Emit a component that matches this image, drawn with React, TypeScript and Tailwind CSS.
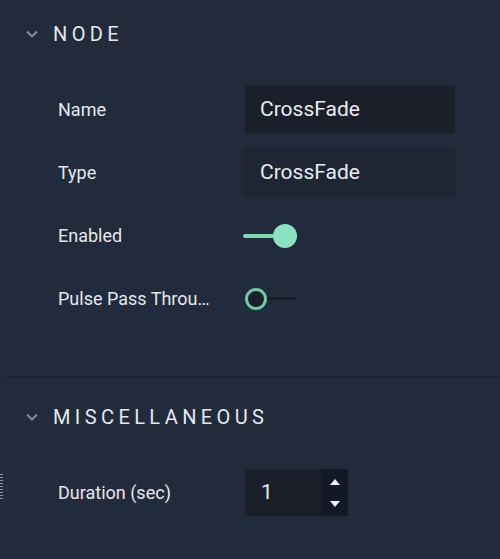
import React from "react";

const font = { fontFamily: "Roboto, 'Noto Sans', sans-serif" };

function Chevron() {
  return (
    <svg width="14" height="10" viewBox="0 0 14 10" className="shrink-0">
      <path d="M2 2.5 L7 7.5 L12 2.5" fill="none" stroke="#8a919c" strokeWidth="1.8" />
    </svg>
  );
}

function SectionHeader({ title }: { title: string }) {
  return (
    <div className="flex h-[68px] items-center gap-[14px] pl-[25px]">
      <Chevron />
      <span className="text-[20px] tracking-[0.22em] text-[#e4e8ee]">{title}</span>
    </div>
  );
}

function Row({ label, children }: { label: string; children: React.ReactNode }) {
  return (
    <div className="flex h-[63px] items-center">
      <div className="w-[245px] shrink-0 truncate pl-[58px] pr-[32px] text-[18px] text-[#e4e8ee]">{label}</div>
      {children}
    </div>
  );
}

export default function App() {
  return (
    <div className="relative h-[559px] w-[500px] overflow-hidden bg-[#222b3b]" style={font}>
      <SectionHeader title="NODE" />
      <div className="pt-[10px]">
        <Row label="Name">
          <div className="flex h-[47px] w-[210px] items-center bg-[#1a1f29] pl-[15px] text-[21px] text-[#e8ecf2]">
            CrossFade
          </div>
        </Row>
        <Row label="Type">
          <div className="ml-[-2px] flex h-[49px] w-[212px] items-center bg-[#1e2533] pl-[17px] text-[21px] text-[#e8ecf2]">
            CrossFade
          </div>
        </Row>
        <Row label="Enabled">
          <div className="relative h-[24px] w-[56px]">
            <div className="absolute left-[-2px] top-[10px] h-[4px] w-[42px] rounded-full bg-[#7fd7b3]" />
            <div className="absolute left-[28px] top-0 h-[24px] w-[24px] rounded-full bg-[#8ae3c0]" />
          </div>
        </Row>
        <Row label="Pulse Pass Through">
          <div className="relative h-[24px] w-[56px]">
            <div className="absolute left-[20px] top-[10px] h-[3px] w-[32px] rounded-full bg-[#171c25]" />
            <div className="absolute left-0 top-[1px] h-[22px] w-[22px] rounded-full border-[3px] border-[#6fc9a6] bg-[#1a1f29]" />
          </div>
        </Row>
      </div>
      <div className="mt-[46px] ml-[5px] h-[2px] bg-[#1b2230]" />
      <div className="pt-[5px]">
        <SectionHeader title="MISCELLANEOUS" />
      </div>
      <div className="pt-[10px]">
        <Row label="Duration (sec)">
          <div className="flex h-[47px] w-[103px]">
            <div className="flex flex-1 items-center bg-[#1a1f29] pl-[16px] text-[21px] text-[#e8ecf2]">1</div>
            <div className="flex w-[27px] flex-col items-center justify-center gap-[16px] bg-[#131924]">
              <svg width="10" height="6" viewBox="0 0 10 6"><path d="M0 6 L5 0 L10 6 Z" fill="#eef1f5" /></svg>
              <svg width="10" height="6" viewBox="0 0 10 6"><path d="M0 0 L5 6 L10 0 Z" fill="#eef1f5" /></svg>
            </div>
          </div>
        </Row>
      </div>
      <div className="absolute left-0 top-[474px] flex flex-col gap-[2px]">
        {[0, 1, 2, 3, 4, 5, 6, 7, 8].map((i) => (
          <div key={i} className="h-[1px] w-[3px] bg-[#8d949e]" />
        ))}
      </div>
    </div>
  );
}
